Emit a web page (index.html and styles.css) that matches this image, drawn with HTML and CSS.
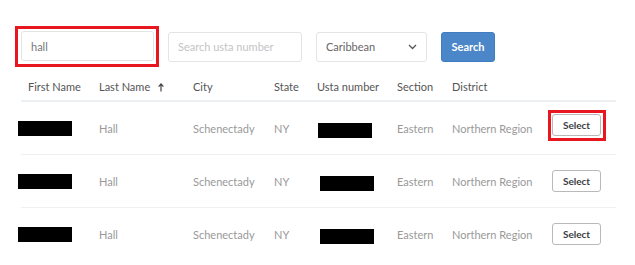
FILE: index.html
```html
<!DOCTYPE html>
<html>
<head>
<meta charset="utf-8">
<link rel="stylesheet" href="styles.css">
</head>
<body>
<div class="page">
  <div class="toolbar">
    <div class="highlight">
      <div class="field name-field"><span class="value">hall</span></div>
    </div>
    <div class="field usta-field"><span class="placeholder">Search usta number</span></div>
    <div class="field dropdown">
      <span class="value">Caribbean</span>
      <svg class="chevron" width="9" height="6" viewBox="0 0 9 6"><path d="M1 1 L4.5 4.5 L8 1" fill="none" stroke="#555" stroke-width="1.3"/></svg>
    </div>
    <button class="search-btn">Search</button>
  </div>
  <table class="results">
    <colgroup>
      <col class="c1"><col class="c2"><col class="c3"><col class="c4"><col class="c5"><col class="c6"><col class="c7"><col class="c8">
    </colgroup>
    <thead>
      <tr>
        <th>First Name</th>
        <th>Last Name <svg class="sort" width="6" height="9" viewBox="0 0 6 9"><path d="M3 8.5 V1.2 M0.6 3.6 L3 1 L5.4 3.6" fill="none" stroke="#444" stroke-width="1.2"/></svg></th>
        <th>City</th>
        <th>State</th>
        <th>Usta number</th>
        <th>Section</th>
        <th>District</th>
        <th></th>
      </tr>
    </thead>
    <tbody>
      <tr>
        <td><span class="redact first"></span></td>
        <td>Hall</td>
        <td>Schenectady</td>
        <td>NY</td>
        <td><span class="redact usta"></span></td>
        <td>Eastern</td>
        <td>Northern Region</td>
        <td><span class="highlight-btn"><button class="select-btn">Select</button></span></td>
      </tr>
      <tr>
        <td><span class="redact first"></span></td>
        <td>Hall</td>
        <td>Schenectady</td>
        <td>NY</td>
        <td><span class="redact usta shift"></span></td>
        <td>Eastern</td>
        <td>Northern Region</td>
        <td><button class="select-btn">Select</button></td>
      </tr>
      <tr>
        <td><span class="redact first"></span></td>
        <td>Hall</td>
        <td>Schenectady</td>
        <td>NY</td>
        <td><span class="redact usta shift"></span></td>
        <td>Eastern</td>
        <td>Northern Region</td>
        <td><button class="select-btn">Select</button></td>
      </tr>
    </tbody>
  </table>
</div>
</body>
</html>
```

FILE: styles.css
```css
html, body {
  margin: 0;
  padding: 0;
  background: #ffffff;
}
body {
  font-family: "Lato", "Noto Sans", sans-serif;
  font-size: 11px;
  color: #555;
}
.page {
  padding: 26px 0 0 15px;
  width: 601px;
}
.toolbar {
  display: flex;
  align-items: center;
  height: 41px;
}
.highlight {
  border: 3px solid #e8161e;
  padding: 2px 2px 3px 3px;
  margin-right: 9px;
}
.field {
  box-sizing: border-box;
  height: 30px;
  border: 1px solid #e4e4e4;
  border-radius: 3px;
  display: flex;
  align-items: center;
  padding: 0 9px;
  background: #fff;
}
.name-field {
  width: 133px;
}
.name-field .value {
  color: #777;
}
.usta-field {
  width: 134px;
  margin-right: 14px;
}
.placeholder {
  color: #c4c4c4;
}
.dropdown {
  width: 111px;
  justify-content: space-between;
  margin-right: 14px;
  padding-right: 9px;
}
.dropdown .value {
  color: #666;
}
.chevron {
  display: block;
  margin-top: 1px;
}
.search-btn {
  box-sizing: border-box;
  width: 54px;
  height: 30px;
  border: 1px solid #3f7cc0;
  border-radius: 3px;
  background: #4a86c8;
  color: #fff;
  font-family: inherit;
  font-size: 11px;
  font-weight: 700;
  padding: 0;
}
.results {
  margin: 5px 0 0 6px;
  width: 595px;
  table-layout: fixed;
  border-collapse: collapse;
}
.c1 { width: 71px; }
.c2 { width: 94px; }
.c3 { width: 81px; }
.c4 { width: 43px; }
.c5 { width: 80px; }
.c6 { width: 55px; }
.c7 { width: 100px; }
.c8 { width: 71px; }
.results th {
  text-align: left;
  font-weight: 400;
  color: #555;
  height: 28px;
  padding: 0 0 0 7px;
  border-bottom: 2px solid #edf0f3;
  white-space: nowrap;
}
.sort {
  margin-left: 5px;
  vertical-align: -1px;
}
.results td {
  height: 52px;
  padding: 0 0 0 7px;
  color: #999;
  border-bottom: 1px solid #eef0f2;
  white-space: nowrap;
}
.results tbody tr:last-child td {
  border-bottom: none;
}
.redact {
  display: inline-block;
  background: #000;
  vertical-align: middle;
}
.redact.first {
  width: 54px;
  height: 15px;
  margin-left: -10px;
  margin-top: -1px;
}
.redact.usta {
  width: 54px;
  height: 15px;
  margin-left: 1px;
  margin-top: 4px;
}
.redact.usta.shift {
  margin-left: 3px;
}
.select-btn {
  box-sizing: border-box;
  width: 49px;
  height: 22px;
  border: 1px solid #b9b9b9;
  border-radius: 3px;
  background: #fff;
  color: #3d3d45;
  font-family: inherit;
  font-size: 10px;
  font-weight: 700;
  padding: 0;
  vertical-align: middle;
}
.highlight-btn {
  display: inline-block;
  border: 3px solid #e8161e;
  padding: 1px 2px 2px 1px;
  margin-left: -4px;
  margin-top: -5px;
  vertical-align: middle;
}
.highlight-btn .select-btn {
  display: block;
}
```
